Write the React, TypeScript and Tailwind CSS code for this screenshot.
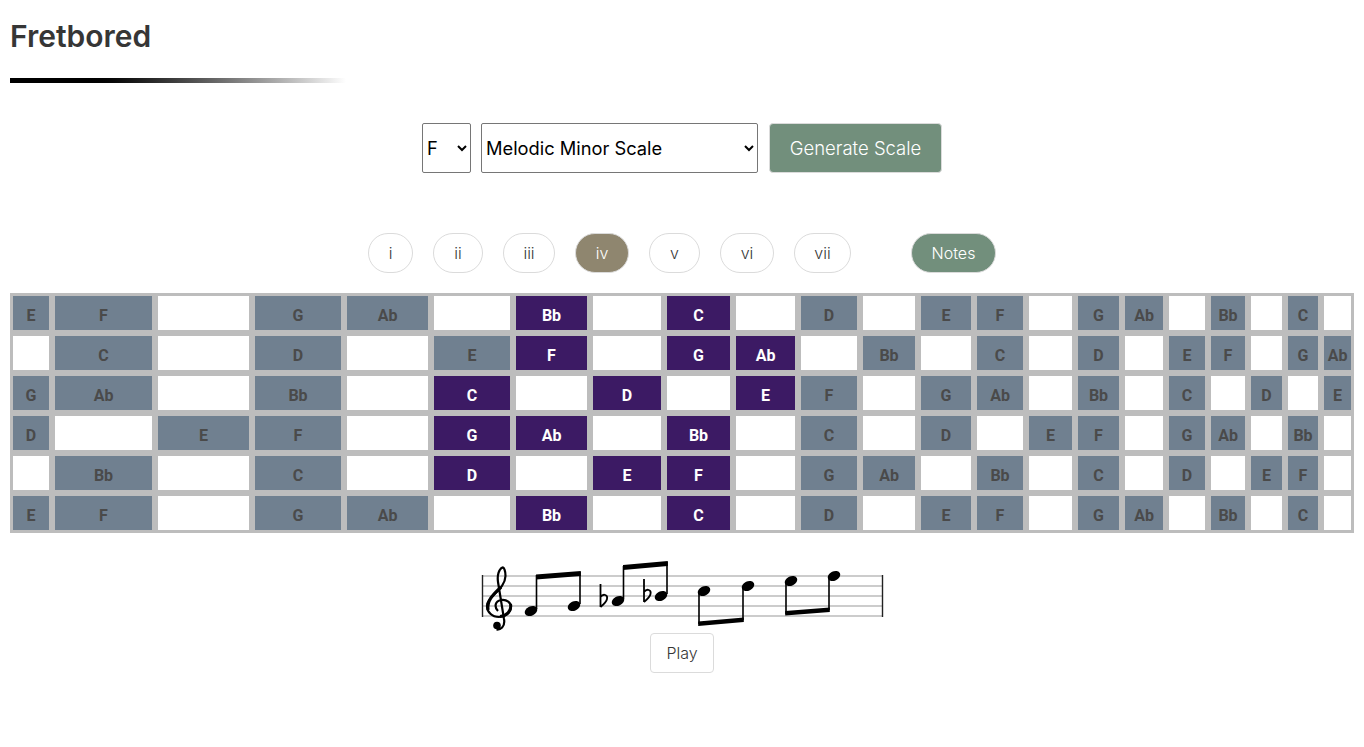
import React from 'react';

// '*' marks a note of the selected chord position
const strings: string[][] = [
  ['E', 'F', '', 'G', 'Ab', '', 'Bb*', '', 'C*', '', 'D', '', 'E', 'F', '', 'G', 'Ab', '', 'Bb', '', 'C', ''],
  ['', 'C', '', 'D', '', 'E', 'F*', '', 'G*', 'Ab*', '', 'Bb', '', 'C', '', 'D', '', 'E', 'F', '', 'G', 'Ab'],
  ['G', 'Ab', '', 'Bb', '', 'C*', '', 'D*', '', 'E*', 'F', '', 'G', 'Ab', '', 'Bb', '', 'C', '', 'D', '', 'E'],
  ['D', '', 'E', 'F', '', 'G*', 'Ab*', '', 'Bb*', '', 'C', '', 'D', '', 'E', 'F', '', 'G', 'Ab', '', 'Bb', ''],
  ['', 'Bb', '', 'C', '', 'D*', '', 'E*', 'F*', '', 'G', 'Ab', '', 'Bb', '', 'C', '', 'D', '', 'E', 'F', ''],
  ['E', 'F', '', 'G', 'Ab', '', 'Bb*', '', 'C*', '', 'D', '', 'E', 'F', '', 'G', 'Ab', '', 'Bb', '', 'C', ''],
];

const degrees = [
  { label: 'i', width: 'w-[45px]' },
  { label: 'ii', width: 'w-[50px]' },
  { label: 'iii', width: 'w-[52px]' },
  { label: 'iv', width: 'w-[54px]' },
  { label: 'v', width: 'w-[51px]' },
  { label: 'vi', width: 'w-[54px]' },
  { label: 'vii', width: 'w-[57px]' },
];

const Cell: React.FC<{ note: string }> = ({ note }) => {
  if (!note) return <div className="bg-white" />;
  const active = note.endsWith('*');
  return (
    <div
      className={
        active
          ? 'flex items-center justify-center pt-[6px] bg-[#3c1a64] text-white'
          : 'flex items-center justify-center pt-[6px] bg-[#708090] text-[#4a4a4a]'
      }
    >
      {note.replace('*', '')}
    </div>
  );
};

const Head: React.FC<{ x: number; y: number }> = ({ x, y }) => (
  <ellipse cx={x} cy={y} rx={6.6} ry={4.6} transform={`rotate(-25 ${x} ${y})`} fill="#000" />
);

const Flat: React.FC<{ x: number; y: number }> = ({ x, y }) => (
  <path
    d={`M${x} ${y} V${y + 23} M${x} ${y + 13} C${x + 3} ${y + 9} ${x + 7.5} ${y + 11} ${x + 6.5} ${y + 15} C${x + 6} ${y + 18} ${x + 3} ${y + 20.5} ${x} ${y + 23}`}
    fill="none"
    stroke="#000"
    strokeWidth={1.8}
  />
);

// coordinates are page pixels shifted by the svg origin (476, 560)
const Staff: React.FC = () => (
  <svg width="412" height="73" viewBox="476 560 412 73" className="block mx-auto">
    {[576, 586, 596, 606, 616].map((y) => (
      <line key={y} x1={482} x2={883} y1={y} y2={y} stroke="#bbb" strokeWidth={1.6} />
    ))}
    <line x1={482.5} x2={482.5} y1={575} y2={617} stroke="#222" strokeWidth={1.4} />
    <line x1={882.5} x2={882.5} y1={575} y2={617} stroke="#222" strokeWidth={1.4} />

    {/* treble clef */}
    <path
      d="M498 611 C494 607 495 601 501 600 C507 599 511 603 511 607 C511 613 505 617 499 617 C492 617 487 612 487 606 C487 596 505 590 505.5 576 C505.5 571 504 567 502.5 567.5 C499 569 497 575 498 582 L504 619 C505.5 627 500 630 496.5 629.5"
      fill="none"
      stroke="#000"
      strokeWidth={2.2}
    />
    <path d="M488 610 C486.5 600 494 594 501 587" fill="none" stroke="#000" strokeWidth={3.2} />
    <path d="M510.5 604 C512 611 506 616 500 616.5" fill="none" stroke="#000" strokeWidth={3} />
    <circle cx={497} cy={625.5} r={3.8} fill="#000" />

    {/* F G */}
    <Head x={531} y={611} />
    <Head x={574} y={606} />
    <path d="M536.5 609 V575 M580 604 V572" stroke="#000" strokeWidth={1.6} />
    <polygon points="536,574.5 580.8,571 580.8,576 536,579.5" fill="#000" />

    {/* Ab Bb */}
    <Flat x={600.5} y={584} />
    <Flat x={644} y={579} />
    <Head x={618} y={601} />
    <Head x={661} y={596} />
    <path d="M623.5 599 V566 M667 594 V562" stroke="#000" strokeWidth={1.6} />
    <polygon points="623,565 667.8,561 667.8,566 623,570" fill="#000" />

    {/* C D */}
    <Head x={704} y={591} />
    <Head x={748} y={586} />
    <path d="M699 592 V624 M743 587 V620" stroke="#000" strokeWidth={1.6} />
    <polygon points="698.2,621.5 743.8,617.5 743.8,622 698.2,626" fill="#000" />

    {/* E F */}
    <Head x={791} y={581} />
    <Head x={834} y={576} />
    <path d="M786 582 V614 M829 577 V610" stroke="#000" strokeWidth={1.6} />
    <polygon points="785.2,611 829.8,607.5 829.8,612 785.2,615.5" fill="#000" />
  </svg>
);

const App: React.FC = () => {
  return (
    <div className="min-h-[747px] bg-white px-[10px] pt-[18px] font-['Inter',sans-serif] text-[#363636]">
      <h1 className="text-3xl font-semibold">Fretbored</h1>
      <div className="mt-[24px] h-[5px] w-[336px] bg-gradient-to-r from-black from-20% to-white" />

      <div className="mt-[40px] flex justify-center gap-[10px]">
        <select
          defaultValue="F"
          className="h-[50px] w-[49px] rounded-[2px] border border-[#767676] text-[18.3px] text-black"
        >
          <option>F</option>
          <option>G</option>
        </select>
        <select
          defaultValue="Melodic Minor Scale"
          className="h-[50px] w-[277px] rounded-[2px] border border-[#767676] text-[18.3px] text-black"
        >
          <option>Melodic Minor Scale</option>
          <option>Major Scale</option>
        </select>
        <button className="ml-px h-[50px] w-[173px] rounded-[4px] border border-[#dbdbdb] bg-[#728f7c] pt-[1px] text-[18.5px] font-light text-white">
          Generate Scale
        </button>
      </div>

      <div className="mt-[60px] flex justify-center">
        <div className="flex gap-[20px]">
          {degrees.map((d) => (
            <button
              key={d.label}
              className={
                d.label === 'iv'
                  ? `h-[40px] ${d.width} rounded-full border border-[#dbdbdb] bg-[#8f866f] font-light text-white`
                  : `h-[40px] ${d.width} rounded-full border border-[#dbdbdb] bg-white font-light`
              }
            >
              {d.label}
            </button>
          ))}
        </div>
        <button className="ml-[60px] h-[40px] w-[85px] rounded-full border border-[#dbdbdb] bg-[#728f7c] font-light text-white">
          Notes
        </button>
      </div>

      <div className="mt-[20px] grid grid-cols-[36px_97px_91px_86px_81px_76px_71px_68px_63px_59px_56px_52px_50px_46px_43px_41px_38px_36px_34px_31px_30px_27px] auto-rows-[34px] gap-[6px] bg-[#bdbdbd] p-[3px] font-['Roboto',sans-serif] font-bold">
        {strings.map((row, i) => row.map((note, j) => <Cell key={`${i}-${j}`} note={note} />))}
      </div>

      <div className="mt-[27px]">
        <Staff />
      </div>
      <div className="flex justify-center">
        <button className="h-[40px] w-[64px] rounded-[4px] border border-[#dbdbdb] bg-white font-light">Play</button>
      </div>
    </div>
  );
};

export default App;
